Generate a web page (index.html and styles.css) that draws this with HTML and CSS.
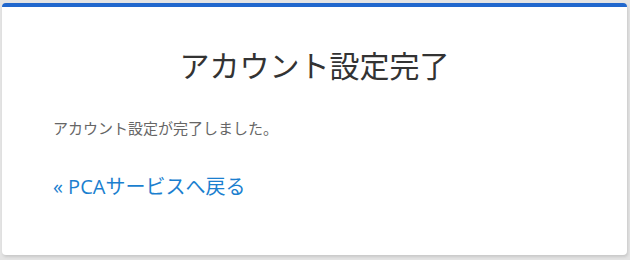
FILE: index.html
```html
<!DOCTYPE html>
<html lang="ja">
<head>
<meta charset="utf-8">
<link rel="stylesheet" href="styles.css">
</head>
<body>
<div class="card">
  <h1 class="title">アカウント設定完了</h1>
  <p class="message">アカウント設定が完了しました。</p>
  <a class="back" href="#">« PCAサービスへ戻る</a>
</div>
</body>
</html>
```
FILE: styles.css
```css
html, body {
  margin: 0;
  padding: 0;
}
body {
  background: #e4e4e4;
  width: 630px;
  height: 260px;
  padding: 3px 3px 0 2px;
  box-sizing: border-box;
  font-family: "Open Sans", "Noto Sans CJK JP", sans-serif;
}
.card {
  background: #fff;
  border-top: 4px solid #2167cd;
  border-radius: 4px;
  box-shadow: 1px 2px 3px rgba(0,0,0,0.12);
  height: 252px;
  box-sizing: border-box;
  padding: 0 51px;
  display: flex;
  flex-direction: column;
}
.title {
  margin: 38px 0 0;
  font-size: 30px;
  line-height: 42px;
  font-weight: 400;
  color: #333;
  text-align: center;
}
.message {
  margin: 31px 0 0;
  font-size: 15px;
  line-height: 20px;
  color: #666;
}
.back {
  margin-top: 35px;
  font-size: 20px;
  line-height: 28px;
  color: #1b7fcf;
  text-decoration: none;
  align-self: flex-start;
}
```
